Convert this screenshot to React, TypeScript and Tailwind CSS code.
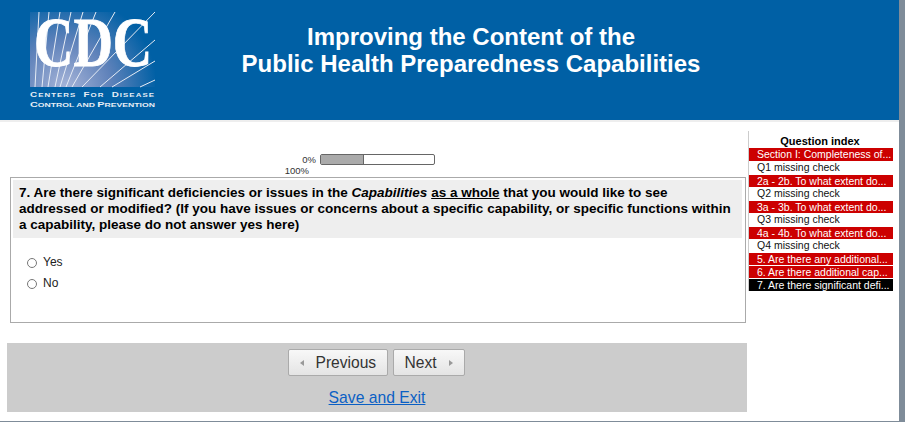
const index = [
  { label: 'Section I: Completeness of...', kind: 'red' },
  { label: 'Q1 missing check', kind: 'plain' },
  { label: '2a - 2b. To what extent do...', kind: 'red' },
  { label: 'Q2 missing check', kind: 'plain' },
  { label: '3a - 3b. To what extent do...', kind: 'red' },
  { label: 'Q3 missing check', kind: 'plain' },
  { label: '4a - 4b. To what extent do...', kind: 'red' },
  { label: 'Q4 missing check', kind: 'plain' },
  { label: '5. Are there any additional...', kind: 'red' },
  { label: '6. Are there additional cap...', kind: 'red' },
  { label: '7. Are there significant defi...', kind: 'black' },
];

function CdcLogo() {
  const rays = [
    [35, 39, 12], [42, 49, 12], [48, 60, 12], [55, 71, 12], [60, 83, 12], [66, 96, 12],
    [72, 115, 12], [82, 155, 12], [100, 155, 40], [112, 155, 61], [140, 155, 80],
  ];
  return (
    <svg width="130" height="100" viewBox="28 10 130 100" overflow="visible" className="shrink-0">
      <defs>
        <radialGradient id="glow" gradientUnits="userSpaceOnUse" cx="65" cy="87" r="92">
          <stop offset="0" stopColor="#a6b4d8" />
          <stop offset="0.5" stopColor="#5f82ba" />
          <stop offset="1" stopColor="#0060a5" />
        </radialGradient>
      </defs>
      <rect x="30" y="12" width="125" height="75" fill="url(#glow)" />
      {rays.map((r, i) => (
        <line key={i} x1={r[0]} y1="87" x2={r[1]} y2={r[2]} stroke="#e6ecf5" strokeWidth="1" />
      ))}
      <g transform="translate(34 66) scale(0.78 1)" fill="#fff" stroke="#fff" strokeWidth="0.8" fontFamily="'Liberation Serif', serif" fontWeight="700" fontSize="70">
        <text>CDC</text>
      </g>
      <g fill="#e6edf5" fontFamily="'Liberation Sans', sans-serif" fontWeight="700" fontSize="6">
        <text x="30" y="97" textLength="125" lengthAdjust="spacingAndGlyphs" letterSpacing="0.8" wordSpacing="3">
          <tspan fontSize="7.5">C</tspan>ENTERS <tspan fontSize="7.5">F</tspan>OR <tspan fontSize="7.5">D</tspan>ISEASE
        </text>
        <text x="30" y="107" textLength="125" lengthAdjust="spacingAndGlyphs">
          <tspan fontSize="7.5">C</tspan>ONTROL AND <tspan fontSize="7.5">P</tspan>REVENTION
        </text>
      </g>
    </svg>
  );
}

export default function App() {
  return (
    <div className="w-[905px] h-[422px] overflow-hidden bg-white font-['Liberation_Sans',Arial,sans-serif] text-black flex">
      <div className="w-[899px] shrink-0 flex flex-col border-b border-[#7f8c99]">
        {/* Header */}
        <div className="h-[120px] shrink-0 bg-[#0060a5] flex items-start pl-[28px] pt-[10px]">
          <CdcLogo />
          <div className="w-[600px] ml-[13px] pt-[13px] text-center text-white font-bold text-[24px] leading-[27px]">
            <div>Improving the Content of the</div>
            <div>Public Health Preparedness Capabilities</div>
          </div>
        </div>
        <div className="h-[2px] shrink-0 bg-[#eee]" />

        <div className="flex-1 flex">
          {/* Main column */}
          <div className="w-[748px] shrink-0 flex flex-col pl-[7px]">
            <div className="h-[55px] shrink-0 pt-[32px] pl-[273px] text-[9.5px] leading-[11px] text-[#333]">
              <div className="flex">
                <div className="w-[40px] text-right pr-[4px]">0%</div>
                <div className="w-[115px] h-[11px] border border-[#666] rounded-[2px] bg-white">
                  <div className="w-[43px] h-full bg-[#aaa] border-r border-[#666]" />
                </div>
              </div>
              <div className="w-[40px] text-right pr-[11px] whitespace-nowrap">100%</div>
            </div>
            <div className="ml-[3px] w-[736px] h-[146px] shrink-0 border border-[#aaa] pt-[2px] pl-[2px] pr-[3px]">
              <div className="bg-[#eee] h-[58px] pl-[6px] pt-[5px] text-[13.5px] leading-[16px] font-bold whitespace-nowrap">
                7. Are there significant deficiencies or issues in the <em>Capabilities</em> <span className="underline">as a whole</span> that you would like to see<br />
                addressed or modified? (If you have issues or concerns about a specific capability, or specific functions within<br />
                a capability, please do not answer yes here)
              </div>
              <div className="pl-[14px] pt-[14px] text-[12px] leading-[21px] text-[#222]">
                {['Yes', 'No'].map((o) => (
                  <div key={o} className="flex items-center gap-[6px]">
                    <span className="w-[10px] h-[10px] rounded-full border border-[#777] bg-white" />
                    {o}
                  </div>
                ))}
              </div>
            </div>
            <div className="mt-[20px] w-[740px] h-[69px] shrink-0 bg-[#ccc] flex flex-col items-center pt-[6px]">
              <div className="flex gap-[5px] text-[15.6px] text-[#333] -ml-[2px]">
                <button className="w-[100px] h-[27px] flex items-center pl-[11px] gap-[12px] border border-[#aaa] rounded-[2px] bg-gradient-to-b from-[#f8f8f8] to-[#e4e4e4]">
                  <span className="w-0 h-0 border-y-[3px] border-y-transparent border-r-[4px] border-r-[#999]" />
                  Previous
                </button>
                <button className="w-[72px] h-[27px] flex items-center pl-[11px] gap-[12px] border border-[#aaa] rounded-[2px] bg-gradient-to-b from-[#f8f8f8] to-[#e4e4e4]">
                  Next
                  <span className="w-0 h-0 border-y-[3px] border-y-transparent border-l-[4px] border-l-[#999]" />
                </button>
              </div>
              <a className="mt-[13px] text-[15.7px] leading-[18px] text-[#0a5fc4] underline">Save and Exit</a>
            </div>
          </div>

          {/* Question index */}
          <div className="flex-1 flex flex-col">
            <div className="mt-[9px] border-l border-[#ccc] h-[160px] text-[10.5px] leading-[12px] whitespace-nowrap">
              <div className="h-[17px] pt-[3px] text-center font-bold text-[11px] leading-[14px] pr-[8px]">Question index</div>
              {index.map((q, i) => (
                <div
                  key={q.label}
                  className={
                    q.kind === 'red'
                      ? (i === 0 ? 'bg-[#c00] text-white h-[13px] mb-px pl-[8px] w-[144px]' : 'bg-[#c00] text-white h-[12px] mb-px pl-[8px] w-[144px]')
                      : q.kind === 'black'
                        ? 'bg-black text-white h-[12px] pl-[8px] w-[144px]'
                        : 'h-[12px] leading-[10px] mb-px pl-[8px] w-[144px] text-[#111]'
                  }
                >
                  {q.label}
                </div>
              ))}
            </div>
          </div>
        </div>
      </div>
      <div className="w-[6px] shrink-0 bg-[#7f8c99]" />
    </div>
  );
}
